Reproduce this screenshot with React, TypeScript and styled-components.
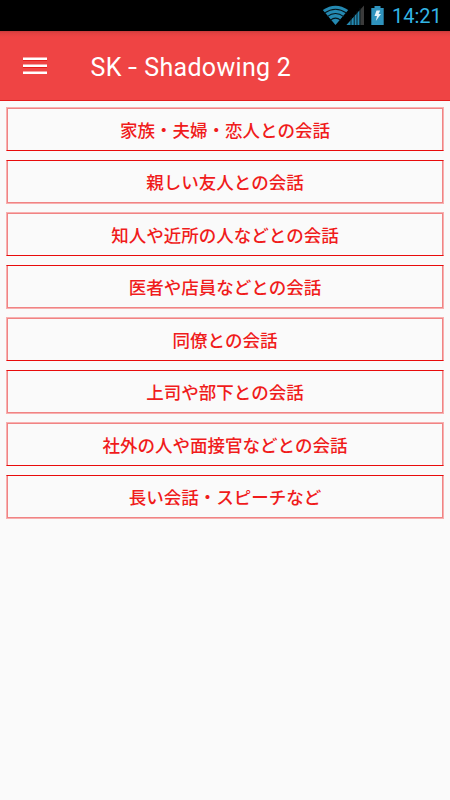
import React from 'react';
import styled, { createGlobalStyle } from 'styled-components';

const GlobalStyle = createGlobalStyle`
  * { box-sizing: border-box; }
  body { margin: 0; background: #fafafa; }
`;

const Screen = styled.div`
  width: 450px;
  height: 800px;
  display: flex;
  flex-direction: column;
  background: #fafafa;
  overflow: hidden;
  font-family: Roboto, 'Noto Sans CJK JP', sans-serif;
`;

const StatusBar = styled.div`
  height: 31px;
  flex: none;
  display: flex;
  justify-content: flex-end;
  align-items: flex-start;
  padding-right: 8px;
  background: #000;
`;

const StatusIcons = styled.svg`
  display: block;
  width: 64px;
  height: 31px;
`;

const Clock = styled.time`
  width: 50px;
  margin-left: 6px;
  font-size: 20px;
  line-height: 32px;
  color: #33b5e5;
  white-space: nowrap;
`;

const AppBar = styled.header`
  height: 70px;
  flex: none;
  display: flex;
  align-items: center;
  padding-left: 23px;
  background: linear-gradient(#c93a3a, #e14141 2px, #ef4444 6px);
  border-bottom: 1px solid #e51c1c;
`;

const MenuButton = styled.button`
  width: 24px;
  height: 24px;
  padding: 0;
  border: 0;
  background: none;
`;

const MenuIcon = styled.svg`
  display: block;
`;

const Title = styled.h1`
  margin: 5px 0 0 43.5px;
  font-size: 25px;
  font-weight: 400;
  line-height: 32px;
  letter-spacing: 0.3px;
  color: #fff;
  white-space: nowrap;
`;

const Dash = styled.span`
  display: inline-block;
  margin: 0 1.5px 0 1px;
  transform: scaleX(1.3);
`;

const List = styled.main`
  display: flex;
  flex-direction: column;
  padding: 6px 6px 0;
`;

const crisp = '#e80c0c';
const outer = '#f8b0b0';
const inner = '#f08484';

const Item = styled.button<{ $softTop: boolean }>`
  height: 44px;
  flex: none;
  margin-bottom: ${(p) => (p.$softTop ? 9 : 8)}px;
  padding: ${(p) => (p.$softTop ? '1px 1px 0' : '0 1px 1px')};
  border: 1px solid ${outer};
  border-top-color: ${(p) => (p.$softTop ? outer : crisp)};
  border-bottom-color: ${(p) => (p.$softTop ? crisp : outer)};
  box-shadow:
    inset 1px 0 ${inner},
    inset -1px 0 ${inner},
    inset 0 ${(p) => (p.$softTop ? 1 : -1)}px ${inner};
  background: transparent;
  font-family: 'Noto Sans CJK JP', sans-serif;
  font-size: 17.5px;
  font-weight: 500;
  line-height: 26px;
  color: #f01c1c;
  white-space: nowrap;
`;

const topics = [
  '家族・夫婦・恋人との会話',
  '親しい友人との会話',
  '知人や近所の人などとの会話',
  '医者や店員などとの会話',
  '同僚との会話',
  '上司や部下との会話',
  '社外の人や面接官などとの会話',
  '長い会話・スピーチなど',
];

export default function App() {
  return (
    <>
      <GlobalStyle />
      <Screen>
        <StatusBar>
          <StatusIcons viewBox="322 0 64 31" aria-hidden="true">
            <path d="M335.5 25 L322.8 10 Q335.5 1.5 348.2 10 Z" fill="#2489b2" />
            <g fill="none" stroke="#06141a" strokeWidth="1.1">
              <path d="M324.5 13 Q335.5 5.5 346.5 13" />
              <path d="M327.2 16.6 Q335.5 10.5 343.8 16.6" />
              <path d="M330.4 20.2 Q335.5 16 340.6 20.2" />
            </g>
            <path d="M346.5 25 L364 5.5 V25 Z" fill="#3b3b3b" />
            <path d="M346.5 25 L359.5 10.5 V25 Z" fill="#2489b2" />
            <path
              d="M351 17V25M354.2 14V25M357 11V25M360 8V25"
              stroke="#06141a"
              strokeWidth="0.9"
            />
            <path d="M371.3 8 H374.5 V6 H380.5 V8 H383.7 V25 H371.3 Z" fill="#2f93bd" />
            <path d="M376.5 10.5 L380.2 10.5 L378.6 14 L381 14 L375.8 21 L377 16 L374.5 16 Z" fill="#e4f3f8" />
          </StatusIcons>
          <Clock>14:21</Clock>
        </StatusBar>
        <AppBar>
          <MenuButton aria-label="Menu">
            <MenuIcon width="24" height="24" viewBox="0 0 24 24">
              <g fill="#e51c1c">
                <rect x="0" y="6" width="24" height="1" />
                <rect x="0" y="13" width="24" height="1" />
              </g>
              <g fill="#fff">
                <rect x="0" y="3.5" width="24" height="2.5" />
                <rect x="0" y="10.5" width="24" height="2.5" />
                <rect x="0" y="17.5" width="24" height="2.5" />
              </g>
            </MenuIcon>
          </MenuButton>
          <Title>
            SK <Dash>-</Dash> Shadowing 2
          </Title>
        </AppBar>
        <List>
          {topics.map((topic, i) => (
            <Item key={topic} $softTop={i % 2 === 0}>
              {topic}
            </Item>
          ))}
        </List>
      </Screen>
    </>
  );
}
